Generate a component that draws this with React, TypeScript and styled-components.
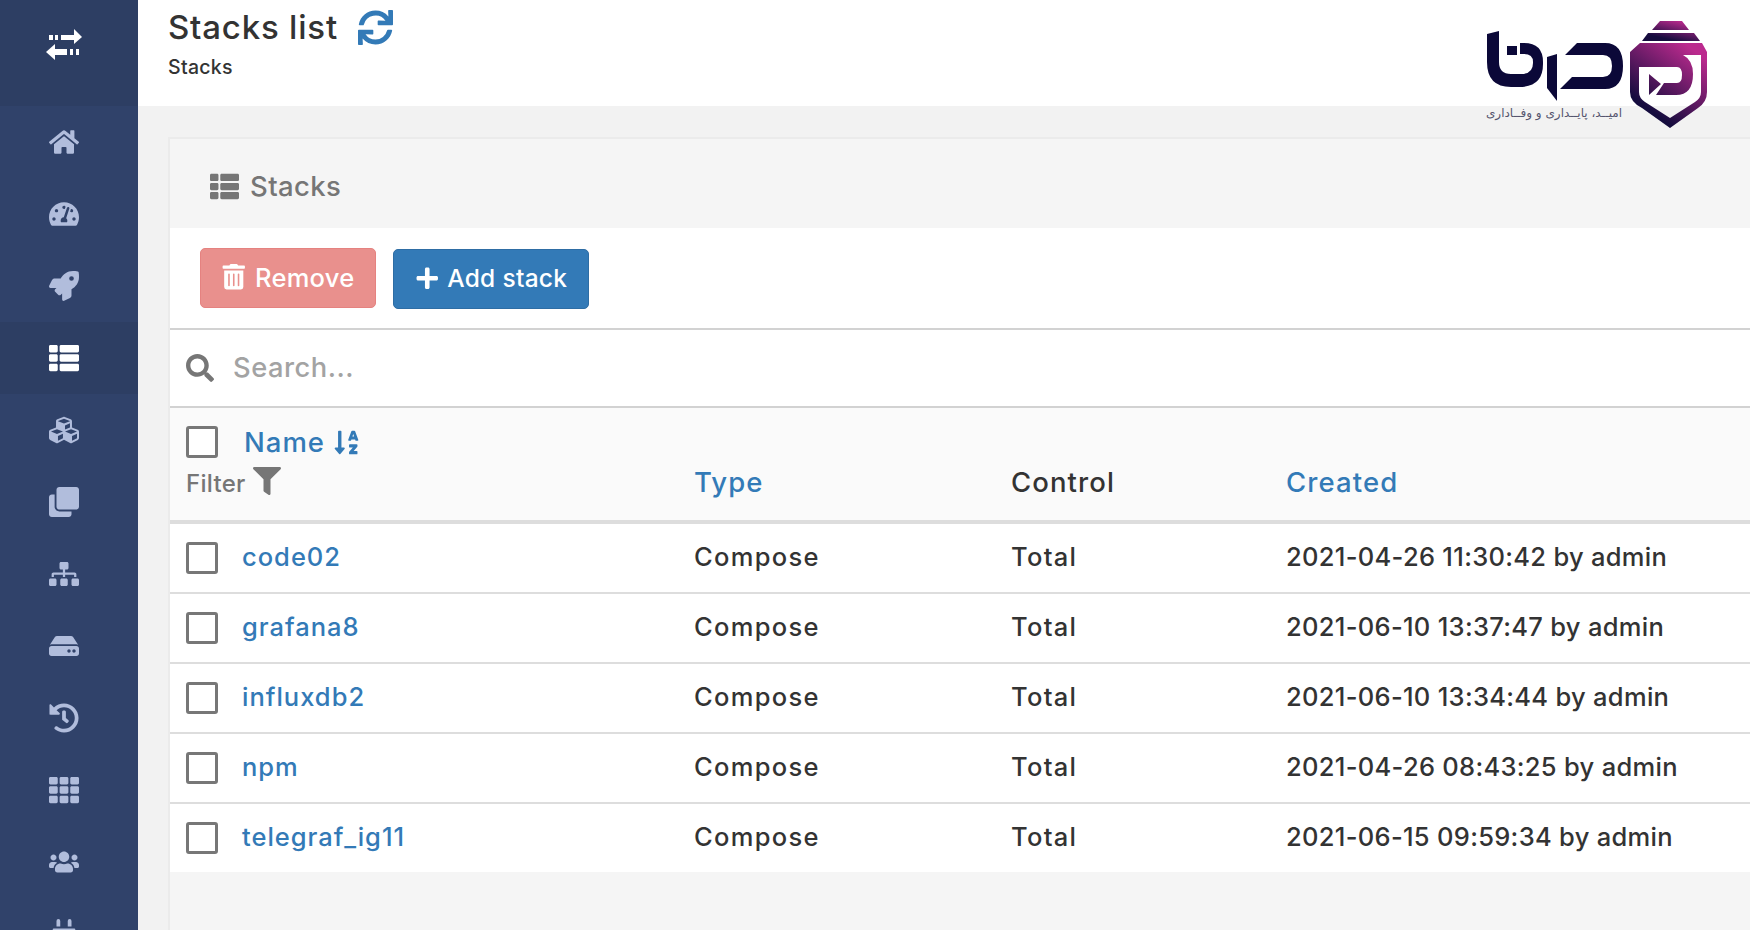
import React from 'react';
import styled, { createGlobalStyle } from 'styled-components';
import {
  FaClone,
  FaCubes,
  FaFilter,
  FaHdd,
  FaHistory,
  FaHome,
  FaPlug,
  FaPlus,
  FaRocket,
  FaSearch,
  FaSitemap,
  FaSortAlphaDown,
  FaSync,
  FaTachometerAlt,
  FaTh,
  FaThList,
  FaTrashAlt,
  FaUsers,
} from 'react-icons/fa';

const GlobalStyle = createGlobalStyle`
  html, body {
    margin: 0;
    height: 100%;
    overflow: hidden;
    background: #f2f2f2;
    font-family: Inter, "Noto Sans", "Liberation Sans", sans-serif;
    font-weight: 540;
    color: #333;
  }
  * { box-sizing: border-box; }
`;

const Shell = styled.div`
  display: flex;
  height: 930px;
  overflow: hidden;
`;

const Sidebar = styled.nav`
  flex: 0 0 138px;
  background: #30426a;
  color: #b1bddc;
`;

const Brand = styled.div`
  height: 106px;
  background: #2d3e63;
  color: #fff;
  display: flex;
  align-items: center;
  justify-content: center;
  padding: 0 10px 17px 0;
`;

const NavItem = styled.div<{ $active?: boolean }>`
  height: 72px;
  display: flex;
  align-items: center;
  justify-content: center;
  padding-right: 10px;
  font-size: 30px;
  background: ${props => (props.$active ? '#2d3e63' : 'transparent')};
  color: ${props => (props.$active ? '#fff' : '#b1bddc')};
`;

const Main = styled.main`
  flex: 1;
  min-width: 0;
  position: relative;
`;

const PageHeader = styled.header`
  height: 106px;
  background: #fff;
  padding: 8px 0 0 30px;
`;

const TitleRow = styled.div`
  display: flex;
  align-items: center;
  gap: 20px;
  height: 38px;
`;

const Title = styled.h1`
  margin: 0;
  font-size: 33px;
  font-weight: 540;
  letter-spacing: 0.8px;
  color: #333;
`;

const RefreshIcon = styled(FaSync)`
  color: #337ab7;
  font-size: 35px;
`;

const Crumb = styled.div`
  margin-top: 9px;
  font-size: 19.5px;
  letter-spacing: 0.3px;
  line-height: 24px;
`;

const Logo = styled.div`
  position: absolute;
  top: 0;
  right: 30px;
  width: 240px;
  height: 135px;
`;

const LogoArt = styled.svg`
  display: block;
`;

const LogoTagline = styled.span`
  position: absolute;
  left: 0;
  top: 106px;
  width: 148px;
  text-align: center;
  direction: rtl;
  font-family: "DejaVu Sans", sans-serif;
  font-size: 12px;
  line-height: 14px;
  color: #55556e;
  white-space: nowrap;
`;

const Content = styled.div`
  padding: 31px 0 0 30px;
`;

const Card = styled.section`
  height: 800px;
  background: #f5f5f5;
  border-left: 2px solid #ebebeb;
  border-top: 2px solid #ebebeb;
`;

const CardTitle = styled.div`
  height: 89px;
  display: flex;
  align-items: center;
  gap: 11px;
  padding: 5px 0 0 40px;
  font-size: 27.5px;
  letter-spacing: 0.4px;
  color: #767676;
`;

const CardTitleIcon = styled(FaThList)`
  font-size: 29px;
`;

const Toolbar = styled.div`
  height: 102px;
  background: #fff;
  border-bottom: 2px solid #d2d2d2;
  display: flex;
  align-items: flex-start;
  gap: 17px;
  padding: 20px 0 0 30px;
`;

const Button = styled.button<{ $variant: 'danger' | 'primary' }>`
  display: inline-flex;
  align-items: center;
  justify-content: center;
  height: 60px;
  padding: 0 0 2px;
  gap: 8px;
  width: ${props => (props.$variant === 'danger' ? '176px' : '196px')};
  margin-top: ${props => (props.$variant === 'danger' ? '0' : '1px')};
  border-radius: 5px;
  border: 1px solid ${props => (props.$variant === 'danger' ? '#e58280' : '#2e6da4')};
  background: ${props => (props.$variant === 'danger' ? '#e9908d' : '#337ab7')};
  color: #fff;
  font-family: inherit;
  font-weight: 540;
  font-size: ${props => (props.$variant === 'danger' ? '25.5px' : '24.5px')};
  letter-spacing: 0.3px;
`;

const SearchBar = styled.div`
  height: 78px;
  background: #fff;
  border-bottom: 2px solid #d2d2d2;
  display: flex;
  align-items: center;
  gap: 19px;
  padding-left: 16px;
  color: #767676;
  font-size: 28px;
`;

const SearchPlaceholder = styled.span`
  padding-bottom: 2px;
  color: #a3a3a3;
  font-size: 27.3px;
  letter-spacing: 0.5px;
`;

const TableHead = styled.div`
  height: 116px;
  background: #fafafa;
  border-bottom: 4px solid #ddd;
  display: grid;
  grid-template-columns: 508px 317px 275px 1fr;
  padding: 18px 0 0 16px;
`;

const NameHead = styled.div`
  display: flex;
  flex-direction: column;
  gap: 8px;
`;

const NameHeadRow = styled.div`
  display: flex;
  align-items: center;
  gap: 26px;
  height: 32px;
`;

const SortLink = styled.span`
  display: inline-flex;
  align-items: center;
  gap: 8px;
  color: #337ab7;
  font-size: 27.5px;
  letter-spacing: 1px;
  line-height: 30px;
`;

const SortIcon = styled(FaSortAlphaDown)`
  font-size: 27px;
`;

const FilterRow = styled.div`
  display: flex;
  align-items: center;
  gap: 7px;
  height: 34px;
  color: #767676;
  font-size: 24px;
  letter-spacing: 0.3px;
`;

const FilterIcon = styled(FaFilter)`
  font-size: 28px;
  margin-top: -4px;
`;

const HeadLabel = styled.div<{ $link?: boolean }>`
  align-self: end;
  margin-bottom: 22px;
  font-size: 27.5px;
  letter-spacing: 1.1px;
  line-height: 32px;
  color: ${props => (props.$link ? '#337ab7' : '#333')};
`;

const Row = styled.div`
  height: 70px;
  background: #fff;
  border-bottom: 2px solid #ddd;
  display: grid;
  grid-template-columns: 508px 317px 275px 1fr;
  align-items: center;
  padding-left: 16px;
  font-size: 25.5px;
  letter-spacing: 0.3px;

  &:last-child {
    height: 68px;
    border-bottom: 0;
  }
`;

const NameCell = styled.div`
  display: flex;
  align-items: center;
  gap: 24px;
`;

const Checkbox = styled.span`
  display: block;
  flex: none;
  width: 32px;
  height: 32px;
  border: 3px solid #777;
  border-radius: 3px;
  background: #fff;
`;

const StackLink = styled.span`
  padding-bottom: 4px;
  color: #337ab7;
  letter-spacing: 1px;
`;

const WordCell = styled.div`
  padding-bottom: 4px;
  letter-spacing: 1.3px;
`;

const DateCell = styled.div`
  padding-bottom: 4px;
`;

const navIcons = [
  FaHome,
  FaTachometerAlt,
  FaRocket,
  FaThList,
  FaCubes,
  FaClone,
  FaSitemap,
  FaHdd,
  FaHistory,
  FaTh,
  FaUsers,
  FaPlug,
];

const stacks = [
  { name: 'code02', created: '2021-04-26 11:30:42 by admin' },
  { name: 'grafana8', created: '2021-06-10 13:37:47 by admin' },
  { name: 'influxdb2', created: '2021-06-10 13:34:44 by admin' },
  { name: 'npm', created: '2021-04-26 08:43:25 by admin' },
  { name: 'telegraf_ig11', created: '2021-06-15 09:59:34 by admin' },
];

// the dashed arrows, react-icons has no version with the dashes
const BrandIcon = () => (
  <svg width="36" height="31" viewBox="0 0 36 31" fill="currentColor">
    <path d="M3 6h4v5H3zM9 6h3v5H9zM15 6h13V0l8 8-8 7v-4H15z" />
    <path d="M0 23l9-8v5h12v6H9v5zM24 20h3v6h-3zM30 20h3v6h-3z" />
  </svg>
);

// coordinates are px from the top left of the logo box
const LogoMark = () => (
  <LogoArt width="240" height="135" viewBox="0 0 240 135">
    <defs>
      <linearGradient id="shield" x1="0.85" y1="0.1" x2="0.35" y2="0.85">
        <stop offset="0" stopColor="#bb2a8e" />
        <stop offset="1" stopColor="#150c3e" />
      </linearGradient>
    </defs>
    <g fill="#0b0838">
      <path d="M7 34L19 31V62Q19 74 31 74H41Q53 74 53 63V62Q53 54 44 54H40V43H44Q63 43 63 62V64Q63 87 39 87H31Q7 87 7 62Z" />
      <rect x="27" y="46" width="10" height="9" />
      <path d="M67 57L77 54V101L67 88Z" />
      <path d="M85 55L97 43H125Q143 43 143 66Q143 89 125 89H80L92 77H123Q132 77 132 66Q132 55 123 55Z" />
    </g>
    <g transform="translate(140 20)" fill="url(#shield)">
      <path d="M40 1H62L69 10H32ZM28 13H74L80 21H22Z" />
      <path
        fillRule="evenodd"
        d="M20 23H82L87 32V72Q87 82 78 88L50 108L22 88Q10 82 10 72V32ZM19 47V72Q19 78 25 82L50 98L75 82Q81 78 81 72V35H63Q73 40 73 54Q73 75 56 75H36L44 63H57Q62 63 62 55Q62 47 57 47ZM29 54V75L41 64Z"
      />
    </g>
  </LogoArt>
);

const App = () => (
  <>
    <GlobalStyle />
    <Shell>
      <Sidebar>
        <Brand>
          <BrandIcon />
        </Brand>
        {navIcons.map((Icon, i) => (
          <NavItem key={i} $active={i === 3}>
            <Icon />
          </NavItem>
        ))}
      </Sidebar>
      <Main>
        <PageHeader>
          <TitleRow>
            <Title>Stacks list</Title>
            <RefreshIcon />
          </TitleRow>
          <Crumb>Stacks</Crumb>
        </PageHeader>
        <Logo>
          <LogoMark />
          <LogoTagline>امیــد، پایــداری و وفــاداری</LogoTagline>
        </Logo>
        <Content>
          <Card>
            <CardTitle>
              <CardTitleIcon />
              Stacks
            </CardTitle>
            <Toolbar>
              <Button $variant="danger">
                <FaTrashAlt />
                Remove
              </Button>
              <Button $variant="primary">
                <FaPlus />
                Add stack
              </Button>
            </Toolbar>
            <SearchBar>
              <FaSearch />
              <SearchPlaceholder>Search...</SearchPlaceholder>
            </SearchBar>
            <TableHead>
              <NameHead>
                <NameHeadRow>
                  <Checkbox />
                  <SortLink>
                    Name
                    <SortIcon />
                  </SortLink>
                </NameHeadRow>
                <FilterRow>
                  Filter
                  <FilterIcon />
                </FilterRow>
              </NameHead>
              <HeadLabel $link>Type</HeadLabel>
              <HeadLabel>Control</HeadLabel>
              <HeadLabel $link>Created</HeadLabel>
            </TableHead>
            {stacks.map(stack => (
              <Row key={stack.name}>
                <NameCell>
                  <Checkbox />
                  <StackLink>{stack.name}</StackLink>
                </NameCell>
                <WordCell>Compose</WordCell>
                <WordCell>Total</WordCell>
                <DateCell>{stack.created}</DateCell>
              </Row>
            ))}
          </Card>
        </Content>
      </Main>
    </Shell>
  </>
);

export default App;
